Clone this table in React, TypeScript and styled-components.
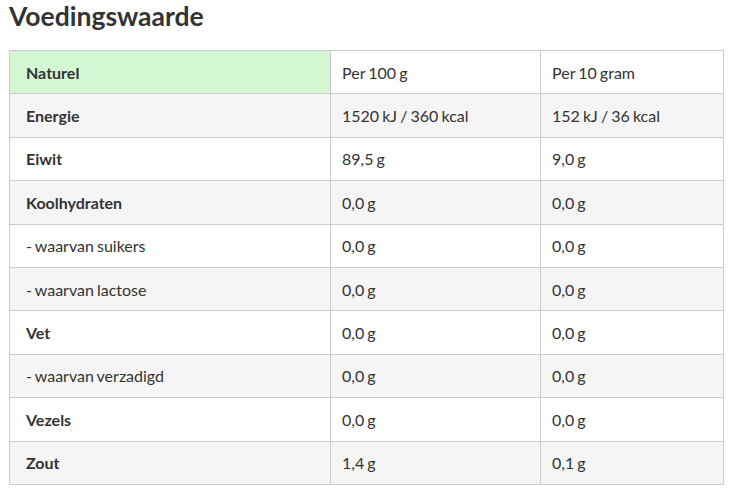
import React from "react";
import styled, {createGlobalStyle} from "styled-components";

const GlobalStyle = createGlobalStyle`
  body {
    margin: 0;
    background: #ffffff;
    font-family: 'Lato', 'Liberation Sans', sans-serif;
    color: #333333;
  }
`

const Page = styled.div`
  padding: 0 6px 0 9px;
`

const Title = styled.h2`
  font-size: 26.5px;
  font-weight: 700;
  line-height: 32px;
  margin: 0 0 18px 0;
  color: #333333;
`

const Table = styled.table`
  width: 714px;
  border-collapse: collapse;
  table-layout: fixed;
  font-size: 16px;
  word-spacing: -1px;
`

const Row = styled.tr<{ $striped: boolean }>`
  background: ${p => p.$striped ? "#f5f5f5" : "#ffffff"};
`

const Cell = styled.td<{ $first?: boolean; $bold?: boolean; $green?: boolean }>`
  height: 42.4px;
  padding: 0 0 0 ${p => p.$first ? "16px" : "11px"};
  border: 1px solid #cccccc;
  vertical-align: middle;
  font-weight: ${p => p.$bold ? 700 : 400};
  background: ${p => p.$green ? "#d3f7d3" : "transparent"};
  color: #333333;
`

type Nutrient = {
    name: string;
    bold: boolean;
    per100: string;
    per10: string;
}

const rows: Nutrient[] = [
    {name: "Energie", bold: true, per100: "1520 kJ / 360 kcal", per10: "152 kJ / 36 kcal"},
    {name: "Eiwit", bold: true, per100: "89,5 g", per10: "9,0 g"},
    {name: "Koolhydraten", bold: true, per100: "0,0 g", per10: "0,0 g"},
    {name: "- waarvan suikers", bold: false, per100: "0,0 g", per10: "0,0 g"},
    {name: "- waarvan lactose", bold: false, per100: "0,0 g", per10: "0,0 g"},
    {name: "Vet", bold: true, per100: "0,0 g", per10: "0,0 g"},
    {name: "- waarvan verzadigd", bold: false, per100: "0,0 g", per10: "0,0 g"},
    {name: "Vezels", bold: true, per100: "0,0 g", per10: "0,0 g"},
    {name: "Zout", bold: true, per100: "1,4 g", per10: "0,1 g"},
];

const App = () => {
    return (
        <Page>
            <GlobalStyle/>
            <Title>Voedingswaarde</Title>
            <Table>
                <colgroup>
                    <col style={{width: 321}}/>
                    <col style={{width: 210}}/>
                    <col style={{width: 183}}/>
                </colgroup>
                <tbody>
                <Row $striped={false}>
                    <Cell $first $bold $green>Naturel</Cell>
                    <Cell>Per 100 g</Cell>
                    <Cell>Per 10 gram</Cell>
                </Row>
                {rows.map((r, i) => (
                    <Row key={r.name} $striped={i % 2 === 0}>
                        <Cell $first $bold={r.bold}>{r.name}</Cell>
                        <Cell>{r.per100}</Cell>
                        <Cell>{r.per10}</Cell>
                    </Row>
                ))}
                </tbody>
            </Table>
        </Page>
    );
}

export default App;
